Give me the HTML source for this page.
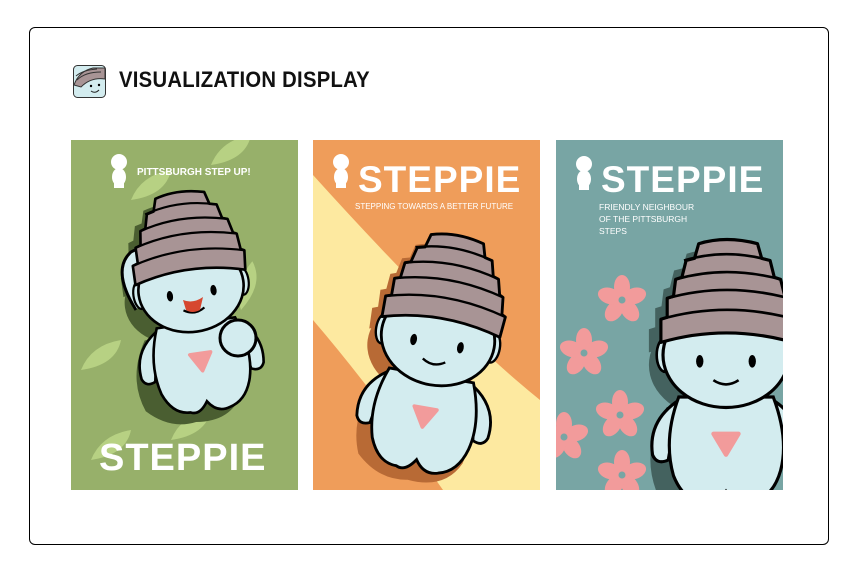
<!DOCTYPE html>
<html><head><meta charset="utf-8"><style>
body{margin:0;width:858px;height:577px;background:#fff;position:relative;overflow:hidden;font-family:"Liberation Sans",sans-serif}
.card{position:absolute;left:29px;top:27px;width:798px;height:516px;border:1px solid #000;border-radius:6px}
.title{position:absolute;left:119px;top:66px;font-size:22px;font-weight:bold;letter-spacing:0.3px;color:#111;line-height:28px;transform:scaleX(0.92);transform-origin:left}
.p{position:absolute;top:140px;width:227px;height:350px;overflow:hidden}
</style></head><body>
<div class="card"></div>
<svg style="position:absolute;left:73px;top:65px" width="33" height="33" viewBox="0 0 33 33">
<rect x="0.5" y="0.5" width="32" height="32" rx="4" fill="#d3ecef" stroke="#333"/>
<path d="M1 20 Q6 6 20 3 L32 3 L32 14 Q18 12 8 22 Z" fill="#a89495" stroke="#333"/>
<path d="M4 15 Q12 7 28 7 M3 11 Q10 5 24 4" stroke="#333" fill="none"/>
<circle cx="18" cy="21" r="1.2"/><circle cx="26" cy="20" r="1.2"/>
<path d="M18 26 Q22 29 26 25" stroke="#222" fill="none"/>
</svg>
<div class="title">VISUALIZATION DISPLAY</div>

<svg width="0" height="0" style="position:absolute">
<defs>
<path id="hatp" d="M-62 -12 L-62 -34 L-56 -36 L-56 -54 L-50 -56 L-48 -72 L-42 -74 L-38 -90 L-30 -92 L-26 -106 Q0 -114 30 -106 L34 -92 L42 -90 L46 -74 L52 -72 L56 -56 L60 -54 L62 -36 L66 -34 L64 -12 Q0 -30 -62 -12 Z"/>
<g id="sh">
<ellipse cx="0" cy="0" rx="62" ry="50"/>
<use href="#hatp"/>
<path d="M-45 40 Q-70 80 -55 120 Q-30 145 0 140 Q40 145 55 115 Q65 80 45 40 Z"/>
</g>
<g id="guy">
<path d="M-40 40 Q-75 60 -70 95 Q-66 105 -55 100 Q-52 80 -45 70 Z" fill="#d3ecef" stroke="#000" stroke-width="3"/>
<path d="M40 40 Q75 60 70 95 Q66 105 55 100 Q52 80 45 70 Z" fill="#d3ecef" stroke="#000" stroke-width="3"/>
<path d="M-45 40 Q-60 80 -50 115 Q-40 140 -20 140 Q-10 145 0 130 Q10 145 25 140 Q45 135 52 110 Q60 80 45 40 Z" fill="#d3ecef" stroke="#000" stroke-width="3"/>
<path d="M-12 75 L12 75 L0 95 Z" fill="#f29b9b" stroke="#f29b9b" stroke-width="4" stroke-linejoin="round"/>
<ellipse cx="-58" cy="0" rx="8" ry="16" fill="#d3ecef" stroke="#000" stroke-width="2.5"/>
<ellipse cx="58" cy="0" rx="8" ry="16" fill="#d3ecef" stroke="#000" stroke-width="2.5"/>
<ellipse cx="0" cy="0" rx="60" ry="50" fill="#d3ecef" stroke="#000" stroke-width="3"/>
<use href="#hatp" fill="#a89495" stroke="#000" stroke-width="3" stroke-linejoin="round"/>
<path d="M-62 -34 Q0 -52 66 -34 M-56 -54 Q0 -70 60 -54 M-48 -72 Q0 -86 52 -72 M-40 -90 Q0 -102 42 -90" stroke="#000" stroke-width="2.5" fill="none"/>
<ellipse cx="-25" cy="6" rx="3.5" ry="6"/><ellipse cx="25" cy="6" rx="3.5" ry="6"/>
<path d="M-12 24 Q0 32 12 24" stroke="#000" stroke-width="2.5" fill="none"/>
</g>
<g id="flower" fill="#f29b9b">
<ellipse cx="0" cy="-13" rx="8" ry="12"/><ellipse cx="0" cy="-13" rx="8" ry="12" transform="rotate(72)"/><ellipse cx="0" cy="-13" rx="8" ry="12" transform="rotate(144)"/><ellipse cx="0" cy="-13" rx="8" ry="12" transform="rotate(216)"/><ellipse cx="0" cy="-13" rx="8" ry="12" transform="rotate(288)"/><circle r="3.5" fill="#78a5a4"/>
</g>
<g id="mini" fill="#fff"><circle cx="0" cy="-8" r="8"/><ellipse cx="0" cy="7" rx="7" ry="9"/><rect x="-5" y="12" width="10" height="6"/></g>
<g id="leaf" fill="#bfd98a" opacity="0.8"><path d="M0 0 Q10 -25 40 -30 Q35 -5 0 0 Z"/></g>
</defs></svg>

<!-- Panel 1 -->
<div class="p" style="left:71px;background:#97b06a">
<svg width="227" height="350">
<use href="#leaf" x="60" y="60"/><use href="#leaf" x="140" y="25"/><use href="#leaf" x="170" y="170" transform="rotate(-40 170 170)"/>
<use href="#leaf" x="10" y="230"/><use href="#leaf" x="20" y="320"/><use href="#leaf" x="100" y="300"/>
<use href="#mini" x="48" y="30"/>
<text x="66" y="35" fill="#fff" font-size="10" font-weight="bold">PITTSBURGH STEP UP!</text>
<g transform="translate(108 160) rotate(-8) scale(0.88)" fill="#4a5e31"><use href="#sh"/></g>
<path d="M65 170 Q40 130 60 112 Q80 100 100 125" fill="#d3ecef" stroke="#000" stroke-width="3"/>
<g transform="translate(120 148) rotate(-8) scale(0.88)"><use href="#guy"/></g>
<circle cx="167" cy="198" r="18" fill="#d3ecef" stroke="#000" stroke-width="3"/>
<path d="M112 160 Q122 164 132 157 L129 170 Q121 174 115 170 Z" fill="#d6472f"/>
<text x="28" y="330" fill="#fff" font-size="38" font-weight="bold" letter-spacing="1">STEPPIE</text>
</svg></div>

<!-- Panel 2 -->
<div class="p" style="left:313px;background:#ef9d5a">
<svg width="227" height="350">
<path d="M0 35 Q140 190 227 260 L227 350 L130 350 Q60 250 0 180 Z" fill="#fde9a0"/>
<use href="#mini" x="28" y="30"/>
<text x="45" y="52" fill="#fff" font-size="37" font-weight="bold" letter-spacing="1">STEPPIE</text>
<text x="42" y="69" fill="#fff" font-size="8">STEPPING TOWARDS A BETTER FUTURE</text>
<g transform="translate(113 208) rotate(8) scale(0.95)" fill="#b86a35"><use href="#sh"/></g>
<g transform="translate(125 198) rotate(10) scale(0.95)"><use href="#guy"/></g>
</svg></div>

<!-- Panel 3 -->
<div class="p" style="left:556px;background:#78a5a4">
<svg width="227" height="350">
<use href="#flower" x="66" y="160"/><use href="#flower" x="28" y="213"/><use href="#flower" x="64" y="275"/><use href="#flower" x="8" y="297"/><use href="#flower" x="66" y="335"/>
<use href="#mini" x="28" y="32"/>
<text x="45" y="52" fill="#fff" font-size="37" font-weight="bold" letter-spacing="1">STEPPIE</text>
<text x="43" y="70" fill="#fff" font-size="8.5">FRIENDLY NEIGHBOUR</text>
<text x="43" y="82" fill="#fff" font-size="8.5">OF THE PITTSBURGH</text>
<text x="43" y="94" fill="#fff" font-size="8.5">STEPS</text>
<g transform="translate(158 225) scale(1.05)" fill="#44625f"><use href="#sh"/></g>
<g transform="translate(170 215) scale(1.05)"><use href="#guy"/></g>
</svg></div>
</body></html>
